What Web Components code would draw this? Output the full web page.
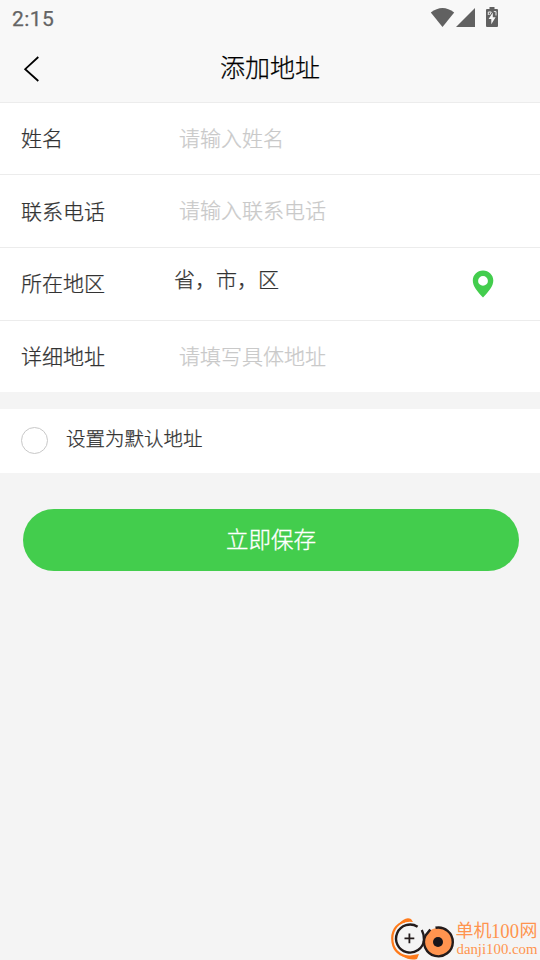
<!DOCTYPE html>
<html lang="zh-CN">
<head>
<meta charset="utf-8">
<title>添加地址</title>
<style>
html,body{margin:0;height:100%;background:#f4f4f4}
body{font-family:"Noto Sans CJK SC",sans-serif;font-weight:300;-webkit-text-stroke-width:.25px;color:#333;overflow:hidden}
</style>
</head>
<body>
<address-page></address-page>
<script>
const define = (name, html) => customElements.define(name, class extends HTMLElement {
  constructor() {
    super();
    const t = document.createElement('template');
    t.innerHTML = html;
    this.attachShadow({mode: 'open'}).append(t.content.cloneNode(true));
  }
});

define('status-bar', `
<style>
:host{display:flex;height:36px;box-sizing:border-box;padding:0 42px 0 12px;justify-content:space-between;font:400 21px/38px Roboto,sans-serif;color:#646464}
.time{letter-spacing:.4px}
svg{display:block}
</style>
<span class="time">2:15</span>
<svg width="68" height="36" viewBox="430 0 68 36" fill="#616161">
<path d="M430.8 12.6Q442.5 3.4 454.2 12.6L442.5 27Z"/>
<path d="M475 8V27H456Z"/>
<path fill-rule="evenodd" d="M489.5 7H494.5V9H497Q498 9 498 10V26Q498 27 497 27H487Q486 27 486 26V10Q486 9 487 9H489.5ZM492.8 12.5L488.6 19H491.3V24.3L495.6 17.3H492.8Z"/>
<path d="M488.3 15V12H491.3L489.6 15M493.8 11.6H496V15.5" fill="none" stroke="#eee" stroke-width="1"/>
</svg>`);

define('nav-bar', `
<style>
:host{display:grid;grid-template-columns:64px 1fr 64px;height:66px;align-items:start}
svg{display:block;margin:18px 0 0 22px}
h1{margin:0;text-align:center;font-size:25px;font-weight:inherit;line-height:36px;padding-top:12px;color:#000}
</style>
<svg width="20" height="30" viewBox="22 54 20 30"><path d="M38.3 57L25.2 69.2L38.3 81" fill="none" stroke="#000" stroke-width="1.8"/></svg>
<h1><slot></slot></h1>`);

define('form-row', `
<style>
:host{display:flex;box-sizing:border-box;height:var(--h,73px);background:#fff;border-top:1px solid #ececec;padding-left:21px;font-size:21px;line-height:30px;position:relative}
.label{width:158px;padding-top:var(--lt,19px)}
.value{flex:1;padding-top:var(--vt,19px);color:var(--vc,#c9c9c9);margin-left:var(--vx,0)}
</style>
<span class="label"><slot name="label"></slot></span>
<span class="value"><slot></slot></span>
<slot name="icon"></slot>`);

define('map-pin', `
<style>:host{display:block;width:22px;margin:22px 46px 0 0}svg{display:block}</style>
<svg width="22" height="28" viewBox="472 270 22 28"><path fill="#43cd4d" fill-rule="evenodd" d="M483 270.4C477.2 270.4 472.8 274.8 472.8 280.5C472.8 286.2 477 291.2 483 297.4C489 291.2 493.3 286.2 493.3 280.5C493.3 274.8 488.8 270.4 483 270.4ZM483 276A4.9 4.9 0 1 1 483 285.8A4.9 4.9 0 0 1 483 276Z"/></svg>`);

define('default-toggle', `
<style>
:host{display:flex;box-sizing:border-box;height:64px;margin-top:17px;background:#fff;padding-left:21px;gap:18px;font-size:19.5px;line-height:30px}
i{box-sizing:border-box;width:27px;height:27px;border:1px solid #c8c8c8;border-radius:50%;margin-top:18px}
span{padding-top:14px}
</style>
<i></i><span><slot></slot></span>`);

define('save-button', `
<style>
:host{display:block;margin:36px 21px 0 23px}
button{display:block;width:100%;height:62px;border:0;border-radius:31px;background:#43cd4d;color:#fff;font:inherit;font-size:22.5px;line-height:32px;padding:0 0 4px;-webkit-text-stroke:.35px #fff}
</style>
<button><slot></slot></button>`);

define('site-mark', `
<style>
:host{position:absolute;right:0;bottom:0;display:block;-webkit-text-stroke-width:0}
svg{display:block}
</style>
<svg width="152" height="46" viewBox="388 914 152 46">
<g fill="none">
<path d="M405 921.5C396 924 391 932 392.5 942C394 951 400 956 410 957" stroke="#ff7a1a" stroke-width="2.2"/>
<path d="M398 925Q405 916 411 919L413 922Q405 921 398 925ZM402 956Q410 956 419 954L417 959Q410 961 402 956Z" fill="#ff7a1a"/>
<path d="M417.6 926.8A14 14 0 1 0 424 940Q424 934 421.8 930" stroke="#231b1b" stroke-width="2.4"/>
<path d="M404.5 938.3H414.3M409.4 933.4V943.2" stroke="#231b1b" stroke-width="1.8"/>
<circle cx="438.2" cy="942" r="14" fill="#ff944f"/>
<path d="M435.5 927.8A14.4 14.4 0 1 1 425.5 935.5Q428 932.5 430.3 929.5" stroke="#231b1b" stroke-width="2.4"/>
</g>
<circle cx="438" cy="942" r="5" fill="#17151a"/>
<g fill="#ff944f">
<text x="455.5" y="937.3" font-size="18" font-weight="400" font-family="Noto Sans CJK SC, sans-serif">单机</text>
<text x="491" y="937.5" font-size="20" textLength="28" lengthAdjust="spacingAndGlyphs" font-weight="400" font-family="Liberation Serif, serif">100</text>
<text x="519.5" y="937.3" font-size="18" font-weight="400" font-family="Noto Sans CJK SC, sans-serif">网</text>
<text x="456.5" y="954" font-size="14.5" textLength="81" font-weight="400" lengthAdjust="spacingAndGlyphs" font-family="Liberation Serif, serif">danji100.com</text>
</g>
</svg>`);

define('address-page', `
<style>
:host{display:block;position:relative;width:540px;height:960px;background:#f4f4f4;overflow:hidden}
header{background:#f8f8f8}
</style>
<header><status-bar></status-bar><nav-bar>添加地址</nav-bar></header>
<form-row style="--h:72px"><span slot="label">姓名</span>请输入姓名</form-row>
<form-row style="--lt:20px"><span slot="label">联系电话</span>请输入联系电话</form-row>
<form-row style="--vt:15px;--vc:#333;--vx:-5px"><span slot="label">所在地区</span>省，市，区<map-pin slot="icon"></map-pin></form-row>
<form-row style="--h:72px"><span slot="label">详细地址</span>请填写具体地址</form-row>
<default-toggle>设置为默认地址</default-toggle>
<save-button>立即保存</save-button>
<site-mark></site-mark>`);
</script>
</body>
</html>
